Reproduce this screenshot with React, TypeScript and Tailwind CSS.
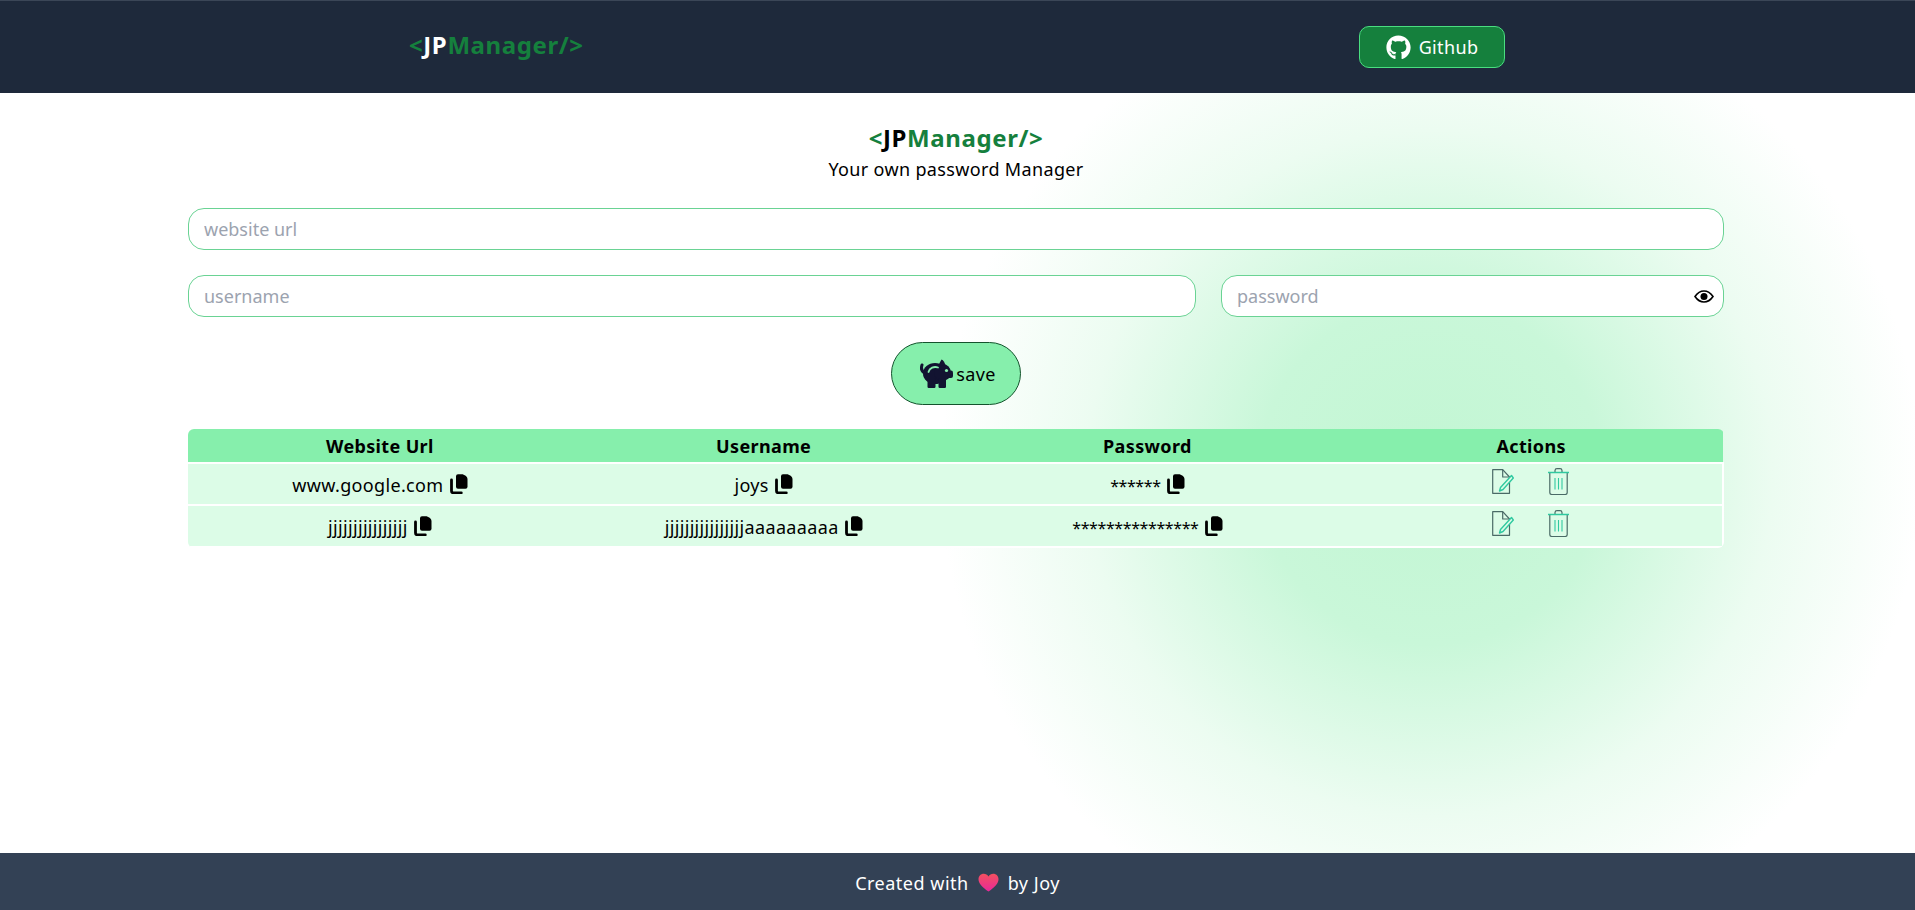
import { FaGithub } from 'react-icons/fa'

const rows = [
  { site: 'www.google.com', username: 'joys', password: '******' },
  { site: 'jjjjjjjjjjjjjjjj', username: 'jjjjjjjjjjjjjjjjaaaaaaaaa', password: '***************' },
]

function Logo({ jpClass }: { jpClass: string }) {
  return (
    <span className="font-bold text-2xl text-[#15803d] tracking-[0.6px]">
      &lt;<span className={jpClass}>JP</span>Manager/&gt;
    </span>
  )
}

function CopyIcon() {
  return (
    <svg width="18" height="20" viewBox="0 0 18 20" className="inline-block shrink-0 ml-[6px] align-[-2px]">
      <path d="M1.500 6v11a1.800 1.800 0 0 0 1.800 1.800h8" fill="none" stroke="#000" strokeWidth="2.800" strokeLinecap="round" />
      <path d="M6 2.300a2 2 0 0 1 2-2h3.500c3 0 6 2.400 6 5v7.500a2 2 0 0 1-2 2H8a2 2 0 0 1-2-2z" fill="#000" />
    </svg>
  )
}

function EyeIcon() {
  return (
    <svg width="20" height="13" viewBox="0 0 20 13" className="absolute right-[10px] top-[15px]">
      <path d="M1 6.500C3.500 2.800 6.500 1 10 1s6.500 1.800 9 5.500C16.500 10.200 13.500 12 10 12S3.500 10.200 1 6.500z" fill="none" stroke="#000" strokeWidth="1.600" />
      <circle cx="10" cy="6.500" r="3.500" fill="#000" />
    </svg>
  )
}

function PigIcon() {
  return (
    <svg width="33" height="29" viewBox="0 0 33 29" className="shrink-0" fill="#121331">
      <ellipse cx="15" cy="14.500" rx="12" ry="10.500" />
      <circle cx="22.500" cy="13.500" r="8.500" />
      <path d="M18 7L21.500.5c2 .8 3.500 3 3.800 6z" />
      <rect x="27" y="11.500" width="6" height="7.500" rx="2" />
      <rect x="7.500" y="19" width="8" height="10" rx="1.200" />
      <rect x="18.500" y="19" width="7.500" height="10" rx="1.200" />
      <path d="M5 14C1.800 12.500.8 9.500 2 6" fill="none" stroke="#121331" strokeWidth="3" strokeLinecap="round" />
      <path d="M8.500 13C9.500 9 14 7 18 8.500" fill="none" stroke="#86efac" strokeWidth="1.800" strokeLinecap="round" />
      <circle cx="26.500" cy="11.500" r="1.600" fill="#86efac" />
    </svg>
  )
}

function EditIcon() {
  return (
    <svg width="22" height="25" viewBox="0 0 22 25" fill="none">
      <path d="M.7.7h10L17.500 8v16.300H.7z" stroke="#4a6a66" strokeWidth="1.200" strokeLinejoin="round" />
      <path d="M10.700.7V8h6.800" stroke="#4a6a66" strokeWidth="1.200" strokeLinejoin="round" />
      <path d="M19.500 6.500L8.500 18.500l-1 3.500 3.500-1.500L21.300 9z" fill="#dcfce7" stroke="#30c9a0" strokeWidth="1.400" strokeLinejoin="round" />
    </svg>
  )
}

function TrashIcon() {
  return (
    <svg width="21" height="27" viewBox="0 0 21 27" fill="none">
      <path d="M1.800 5v19.500a2 2 0 0 0 2 2h13.400a2 2 0 0 0 2-2V5" stroke="#4a6a66" strokeWidth="1.200" />
      <path d="M7 4V2.500A2 2 0 0 1 9 .6h3a2 2 0 0 1 2 1.900V4" stroke="#4a6a66" strokeWidth="1.200" />
      <path d="M0 4.500h21" stroke="#30c9a0" strokeWidth="1.500" />
      <path d="M7 10v11.500M10.500 10v11.500M14 10v11.500" stroke="#30c9a0" strokeWidth="1.100" />
    </svg>
  )
}

function Heart() {
  return (
    <svg width="21" height="19" viewBox="0 0 21 19">
      <defs>
        <linearGradient id="heart" x1="0" y1="0" x2="0" y2="1">
          <stop offset="0" stopColor="#f4505f" />
          <stop offset="1" stopColor="#e8289a" />
        </linearGradient>
      </defs>
      <path d="M10.500 18.500C4 14 .5 10.500.5 6.200.5 3 3 .8 5.700.8c2 0 3.700 1 4.800 2.800C11.600 1.800 13.300.8 15.300.8c2.700 0 5.200 2.200 5.200 5.400 0 4.300-3.500 7.800-10 12.300z" fill="url(#heart)" />
    </svg>
  )
}

const inputClass =
  "h-[42px] bg-white rounded-2xl border border-[#6ad394] px-[15px] text-lg tracking-normal outline-none placeholder:text-[#9ca3af]"

export default function App() {
  return (
    <div className="flex flex-col h-[910px] text-black tracking-[0.35px] font-['Noto_Sans',sans-serif]">
      <nav className="bg-[#1e293b] border-t border-[#3b4657] h-[93px] shrink-0 flex items-center">
        <div className="w-[1096px] ml-[409px] flex items-center justify-between">
          <span className="pb-[4px]">
            <Logo jpClass="text-white" />
          </span>
          <button className="flex items-center gap-2 h-[42px] w-[146px] justify-center bg-[#15803d] text-white text-lg rounded-[10px] border border-[#4ade80]">
            <FaGithub className="text-[25px]" />
            Github
          </button>
        </div>
      </nav>

      <main className="flex-1 bg-[radial-gradient(circle_490px_at_1430px_380px,#c2f6d3_0%,#c9f7d9_35%,#ecfcf1_70%,#ffffff_100%)]">
        <div className="w-[1536px] ml-[188px] pt-[29px]">
          <h1 className="text-center leading-8 h-8 mb-[1px]">
            <Logo jpClass="text-black" />
          </h1>
          <p className="text-center text-lg leading-7">Your own password Manager</p>

          <div className="flex flex-col gap-[25px] mt-[25px] items-center">
            <input placeholder="website url" className={`w-full ${inputClass}`} />
            <div className="flex w-full gap-[25px]">
              <input placeholder="username" className={`flex-1 ${inputClass}`} />
              <div className="relative w-[503px]">
                <input placeholder="password" className={`w-full ${inputClass}`} />
                <EyeIcon />
              </div>
            </div>
            <button className="flex items-center justify-center gap-[3px] h-[63px] w-[130px] pl-[4px] bg-[#86efac] rounded-full border border-[#14532d] text-lg">
              <PigIcon />
              save
            </button>
          </div>

          <table className="w-full table-fixed mt-[24px] text-lg rounded-md overflow-hidden border-collapse">
            <thead className="bg-[#86efac]">
              <tr className="h-[34px]">
                <th className="font-bold">Website Url</th>
                <th className="font-bold">Username</th>
                <th className="font-bold">Password</th>
                <th className="font-bold">Actions</th>
              </tr>
            </thead>
            <tbody className="bg-[#dcfce7]">
              {rows.map((row) => (
                <tr key={row.site} className="h-[42px] border-y-2 border-white">
                  <td className="text-center pt-[2px]">
                    {row.site}
                    <CopyIcon />
                  </td>
                  <td className="text-center pt-[2px]">
                    {row.username}
                    <CopyIcon />
                  </td>
                  <td className="text-center pt-[2px]">
                    <span className="text-base tracking-[-0.4px]">{row.password}</span>
                    <CopyIcon />
                  </td>
                  <td className="text-center border-r-2 border-white">
                    <div className="flex justify-center items-center gap-[34px] pb-[6px]">
                      <EditIcon />
                      <TrashIcon />
                    </div>
                  </td>
                </tr>
              ))}
            </tbody>
          </table>
        </div>
      </main>

      <footer className="bg-[#334155] h-[57px] shrink-0 flex items-center justify-center gap-[9px] pt-[2px] tracking-[0.5px] text-white text-lg">
        Created with <Heart /> by Joy
      </footer>
    </div>
  )
}
